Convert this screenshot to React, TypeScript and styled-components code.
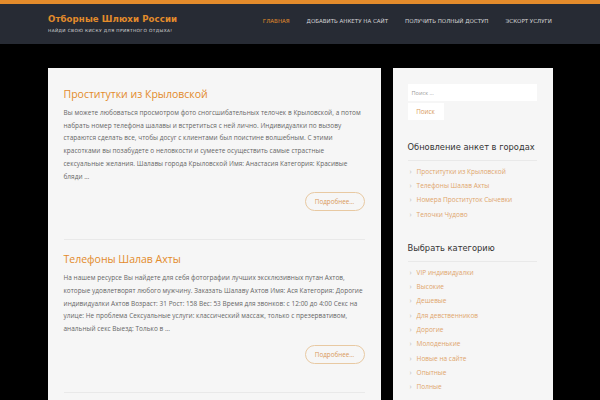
import React from "react";
import styled, { createGlobalStyle } from "styled-components";

const Global = createGlobalStyle`
  html, body { margin: 0; padding: 0; background: #000; }
  body { font-family: "Open Sans", "Liberation Sans", sans-serif; }
  * { box-sizing: border-box; }
`;

const Page = styled.div`
  width: 600px;
  min-height: 400px;
  background: #000;
  overflow: hidden;
`;

const TopLine = styled.div`
  height: 4px;
  background: #e38b2b;
`;

const Header = styled.header`
  height: 40px;
  background: #272b34;
  display: flex;
  align-items: center;
  justify-content: space-between;
  padding: 0 48px;
`;

const Brand = styled.div`
  display: flex;
  flex-direction: column;
  gap: 4px;
  margin-top: -2px;
`;

const SiteTitle = styled.div`
  font-family: "DejaVu Sans", sans-serif;
  font-weight: bold;
  font-size: 8.6px;
  color: #e38b2b;
  letter-spacing: 0.1px;
`;

const Tagline = styled.div`
  font-family: "DejaVu Sans", sans-serif;
  font-size: 4.3px;
  color: #d8d8d8;
  text-transform: uppercase;
  letter-spacing: 0.4px;
`;

const Nav = styled.nav`
  display: flex;
  gap: 17px;
  margin-top: -6px;
`;

const NavItem = styled.a<{ $active?: boolean }>`
  font-family: "DejaVu Sans", sans-serif;
  font-size: 5.5px;
  text-transform: uppercase;
  color: ${(p) => (p.$active ? "#e38b2b" : "#d4d4d4")};
  text-decoration: none;
`;

const Container = styled.div`
  width: 505px;
  margin: 24px auto 0;
  display: grid;
  grid-template-columns: 333px 160px;
  gap: 12px;
  align-items: start;
`;

const MainCard = styled.main`
  background: #f6f6f6;
  padding: 19px 16px 0;
`;

const Post = styled.article`
  padding: 0 0 28px;
  border-bottom: 1px solid #e9e9e9;
  margin-bottom: 12px;
`;

const PostTitle = styled.h2`
  margin: 0 0 6px;
  font-family: "Open Sans", sans-serif;
  font-weight: 400;
  font-size: 10.5px;
  line-height: 14px;
  color: #e38b2b;
`;

const PostText = styled.p`
  margin: 0;
  font-size: 6.45px;
  letter-spacing: 0.04px;
  line-height: 12.7px;
  color: #666;
`;

const MoreRow = styled.div`
  display: flex;
  justify-content: flex-end;
  margin-top: 9px;
`;

const MoreButton = styled.a`
  display: inline-flex;
  align-items: center;
  justify-content: center;
  width: 60px;
  height: 19px;
  border: 1px solid #e8c9a2;
  border-radius: 10px;
  font-size: 6.3px;
  color: #d99a5a;
`;

const Sidebar = styled.aside`
  background: #f6f6f6;
  padding: 16px 16px 10px 15px;
`;

const SearchInput = styled.div`
  height: 17px;
  background: #fff;
  font-size: 5.6px;
  color: #999;
  display: flex;
  align-items: center;
  padding-left: 4px;
`;

const SearchButton = styled.div`
  margin-top: 2px;
  width: 36px;
  height: 17px;
  background: #fff;
  font-size: 6.3px;
  color: #d99a5a;
  display: flex;
  align-items: center;
  justify-content: center;
`;

const Widget = styled.section`
  margin-top: 22px;
`;

const WidgetTitle = styled.h3`
  margin: 0;
  padding-bottom: 8px;
  border-bottom: 1px solid #e9e9e9;
  font-family: "DejaVu Sans", sans-serif;
  font-weight: 400;
  font-size: 8.3px;
  color: #333;
`;

const List = styled.ul`
  list-style: none;
  margin: 3px 0 0;
  padding: 0;
  display: flex;
  flex-direction: column;
`;

const ListItem = styled.li`
  height: 14.3px;
  display: flex;
  align-items: center;
  gap: 5px;
  font-size: 6.5px;
  color: #e0a56c;
  &::before {
    content: "›";
    color: #bbb;
    font-size: 7px;
    padding-left: 2px;
  }
`;

const posts = [
  {
    title: "Проститутки из Крыловской",
    text:
      "Вы можете любоваться просмотром фото сногсшибательных телочек в Крыловской, а потом набрать номер телефона шалавы и встретиться с ней лично. Индивидуалки по вызову стараются сделать все, чтобы досуг с клиентами был поистине волшебным. С этими красотками вы позабудете о неловкости и сумеете осуществить самые страстные сексуальные желания. Шалавы города Крыловской Имя: Анастасия Категория: Красивые бляди …",
  },
  {
    title: "Телефоны Шалав Ахты",
    text:
      "На нашем ресурсе Вы найдете для себя фотографии лучших эксклюзивных путан Ахтов, которые удовлетворят любого мужчину. Заказать Шалаву Ахтов Имя: Ася Категория: Дорогие индивидуалки Ахтов Возраст: 31 Рост: 158 Вес: 53 Время для звонков: с 12:00 до 4:00 Секс на улице: Не проблема Сексуальные услуги: классический массаж, только с презервативом, анальный секс Выезд: Только в …",
  },
];

const updates = [
  "Проститутки из Крыловской",
  "Телефоны Шалав Ахты",
  "Номера Проституток Сычевки",
  "Телочки Чудово",
];

const categories = [
  "VIP индивидуалки",
  "Высокие",
  "Дешевые",
  "Для девственников",
  "Дорогие",
  "Молоденькие",
  "Новые на сайте",
  "Опытные",
  "Полные",
];

export default function App() {
  return (
    <Page>
      <Global />
      <TopLine />
      <Header>
        <Brand>
          <SiteTitle>Отборные Шлюхи России</SiteTitle>
          <Tagline>Найди свою киску для приятного отдыха!</Tagline>
        </Brand>
        <Nav>
          <NavItem $active>Главная</NavItem>
          <NavItem>Добавить анкету на сайт</NavItem>
          <NavItem>Получить полный доступ</NavItem>
          <NavItem>Эскорт услуги</NavItem>
        </Nav>
      </Header>
      <Container>
        <MainCard>
          {posts.map((p) => (
            <Post key={p.title}>
              <PostTitle>{p.title}</PostTitle>
              <PostText>{p.text}</PostText>
              <MoreRow>
                <MoreButton>Подробнее…</MoreButton>
              </MoreRow>
            </Post>
          ))}
        </MainCard>
        <Sidebar>
          <SearchInput>Поиск …</SearchInput>
          <SearchButton>Поиск</SearchButton>
          <Widget>
            <WidgetTitle>Обновление анкет в городах</WidgetTitle>
            <List>
              {updates.map((u) => (
                <ListItem key={u}>{u}</ListItem>
              ))}
            </List>
          </Widget>
          <Widget>
            <WidgetTitle>Выбрать категорию</WidgetTitle>
            <List>
              {categories.map((c) => (
                <ListItem key={c}>{c}</ListItem>
              ))}
            </List>
          </Widget>
        </Sidebar>
      </Container>
    </Page>
  );
}
